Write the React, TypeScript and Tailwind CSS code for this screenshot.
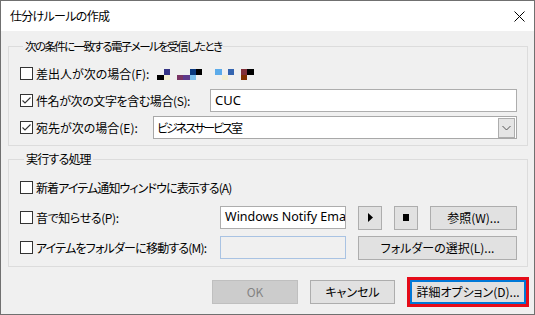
import React from 'react';

const font = '[font-family:"Noto_Sans_CJK_JP","Noto_Sans",sans-serif] [font-feature-settings:"palt"]';

const CheckBox: React.FC<{ checked?: boolean }> = ({ checked }) => (
  <span className="w-[13px] h-[13px] border border-[#333333] bg-white shrink-0 flex items-center justify-center">
    {checked && (
      <svg width="11" height="11" viewBox="0 0 11 11">
        <polyline points="1.5,5.5 4,8 9.5,2.5" fill="none" stroke="#333333" strokeWidth="1.1" />
      </svg>
    )}
  </span>
);

const Label: React.FC<{ checked?: boolean; text: string; track?: string }> = ({ checked, text, track = '' }) => (
  <div className="flex items-center gap-[3px] shrink-0">
    <CheckBox checked={checked} />
    <span className={`text-[12px] leading-[16px] text-black whitespace-nowrap ${track}`}>{text}</span>
  </div>
);

const Btn: React.FC<{ className?: string; children: React.ReactNode; disabled?: boolean }> = ({
  className = '',
  children,
  disabled,
}) => (
  <div
    className={`h-[24px] flex items-center justify-center text-[12px] leading-[16px] border shrink-0 ${
      disabled ? 'bg-[#cccccc] border-[#bfbfbf] text-[#838383]' : 'bg-[#e1e1e1] border-[#adadad] text-black'
    } ${className}`}
  >
    {children}
  </div>
);

// redacted sender address, drawn as pixel blocks
const Blocks = () => (
  <svg width="100" height="11" viewBox="0 0 100 11" className="ml-[4px] mt-[1px]">
    <rect x="0" y="6" width="7" height="5" fill="#000000" />
    <rect x="7" y="0" width="6" height="6" fill="#353585" />
    <rect x="7" y="6" width="6" height="5" fill="#f2efd2" />
    <rect x="20" y="6" width="6" height="5" fill="#7a3564" />
    <rect x="26" y="6" width="7" height="5" fill="#5e3a8c" />
    <rect x="33" y="0" width="6" height="6" fill="#0a3a80" />
    <rect x="39" y="0" width="6" height="6" fill="#000000" />
    <rect x="33" y="6" width="6" height="5" fill="#7cc0ee" />
    <rect x="58" y="0" width="7" height="6" fill="#5cabea" />
    <rect x="65" y="6" width="6" height="5" fill="#f2efd2" />
    <rect x="71" y="0" width="6" height="6" fill="#3565b0" />
    <rect x="84" y="0" width="6" height="6" fill="#82303a" />
    <rect x="90" y="0" width="7" height="6" fill="#000000" />
    <rect x="84" y="6" width="6" height="5" fill="#803000" />
  </svg>
);

export default function App() {
  return (
    <div className={`w-[535px] h-[315px] border border-[#707070] bg-[#f0f0f0] flex flex-col ${font}`}>
      <div className="h-[30px] bg-white flex items-center justify-between pl-[9px] pr-[9px] shrink-0">
        <span className="text-[12px] leading-[16px] text-black tracking-[-0.7px]">仕分けルールの作成</span>
        <svg width="11" height="11" viewBox="0 0 11 11">
          <path d="M0.5 0.5 L10.5 10.5 M10.5 0.5 L0.5 10.5" stroke="#000" strokeWidth="1" />
        </svg>
      </div>

      <div className="flex flex-col pl-[7px] pt-[7px]">
        <fieldset className="w-[520px] border border-[#dcdcdc] pl-[11px] pr-[10px] pt-[8px] pb-[6px] flex flex-col gap-[4px]">
          <legend className="ml-[3px] px-[2px] text-[11.5px] leading-[16px] text-black tracking-[-1.6px]">
            次の条件に一致する電子メールを受信したとき
          </legend>
          <div className="h-[23px] flex items-center">
            <Label text="差出人が次の場合(F):" />
            <div className="w-[364px] ml-auto flex items-center">
              <Blocks />
            </div>
          </div>
          <div className="h-[23px] flex items-center">
            <Label checked text="件名が次の文字を含む場合(S):" track="tracking-[-0.4px]" />
            <div className="w-[307px] h-[23px] ml-auto bg-white border border-[#adadad] flex items-center pl-[4px] text-[13px] [font-family:'Noto_Sans',sans-serif] text-black">
              CUC
            </div>
          </div>
          <div className="h-[23px] flex items-center">
            <Label checked text="宛先が次の場合(E):" />
            <div className="w-[364px] h-[23px] ml-auto bg-white border border-[#a8a8a8] flex items-center justify-between pl-[3px] pr-[1px]">
              <span className="text-[12px] leading-[16px] text-black tracking-[-2px]">ビジネスサービス室</span>
              <div className="w-[17px] h-[20px] bg-[#e5e5e5] border border-[#adadad] flex items-center justify-center">
                <svg width="9" height="6" viewBox="0 0 9 6">
                  <polyline points="0.5,1 4.5,5 8.5,1" fill="none" stroke="#555" strokeWidth="1" />
                </svg>
              </div>
            </div>
          </div>
        </fieldset>

        <fieldset className="w-[520px] mt-[5px] border border-[#dcdcdc] pl-[11px] pr-[10px] pt-[9px] pb-[7px] flex flex-col gap-[7px]">
          <legend className="ml-[4px] px-[2px] text-[12px] leading-[16px] text-black tracking-[-0.8px]">実行する処理</legend>
          <div className="h-[23px] flex items-center">
            <Label text="新着アイテム通知ウィンドウに表示する(A)" track="tracking-[-0.9px]" />
          </div>
          <div className="h-[23px] flex items-center">
            <Label text="音で知らせる(P):" track="tracking-[-0.4px]" />
            <div className="ml-auto flex items-center gap-[12px]">
              <div className="w-[126px] h-[23px] bg-white border border-[#adadad] flex items-center pl-[4px] overflow-hidden whitespace-nowrap text-[12.5px] [font-family:'Noto_Sans',sans-serif] text-black">
                Windows Notify Ema
              </div>
              <Btn className="w-[24px]">
                <svg width="5" height="9" viewBox="0 0 5 9">
                  <polygon points="0,0 5,4.5 0,9" fill="#000" />
                </svg>
              </Btn>
              <Btn className="w-[24px]">
                <span className="w-[6px] h-[7px] bg-black" />
              </Btn>
              <Btn className="w-[87px]">参照(W)...</Btn>
            </div>
          </div>
          <div className="h-[23px] flex items-center">
            <Label text="アイテムをフォルダーに移動する(M):" track="tracking-[-0.8px]" />
            <div className="ml-auto flex items-center gap-[12px]">
              <div className="w-[126px] h-[23px] bg-[#f0f0f0] border border-[#a9c3e3]" />
              <Btn className="w-[159px]">フォルダーの選択(L)...</Btn>
            </div>
          </div>
        </fieldset>
      </div>

      <div className="flex items-center justify-end gap-[12px] pr-[5px] mt-[10px]">
        <Btn disabled className="w-[86px]">OK</Btn>
        <Btn className="w-[85px]">キャンセル</Btn>
        <div className="border-[3px] border-[#e50c19]">
          <div className="w-[116px] h-[24px] border-2 border-[#0078d7] bg-[#e1e1e1] flex items-center justify-center text-[12px] leading-[16px] text-black">
            詳細オプション(D)...
          </div>
        </div>
      </div>
    </div>
  );
}
